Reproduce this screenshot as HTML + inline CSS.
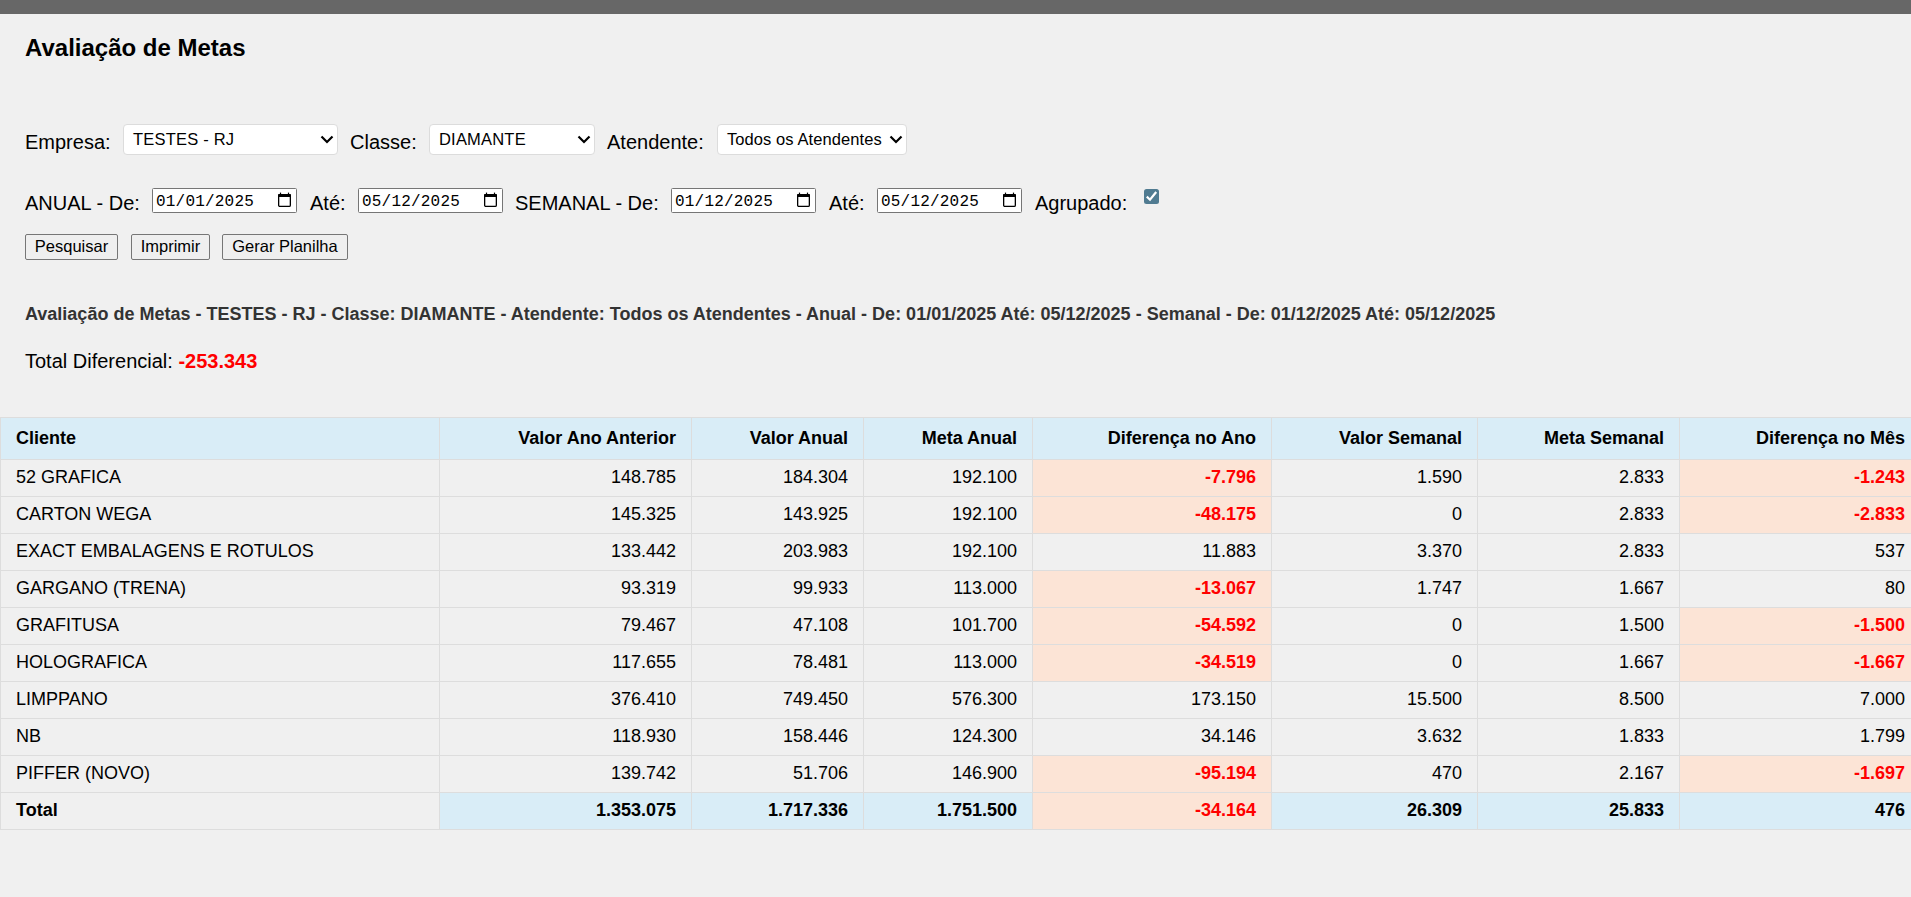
<!DOCTYPE html>
<html><head><meta charset="utf-8">
<style>
html,body{margin:0;padding:0;}
body{background:#f0f0f0;font-family:"Liberation Sans",sans-serif;color:#000;width:1911px;height:897px;overflow:hidden;position:relative;}
.topbar{position:absolute;left:0;top:0;width:1911px;height:14px;background:#676767;}
.abs{position:absolute;white-space:nowrap;}
h1{position:absolute;left:25px;top:34px;margin:0;font-size:24px;font-weight:bold;line-height:28px;}
.lbl{font-size:20px;line-height:23px;}
.sel{position:absolute;white-space:nowrap;font-size:16.5px;background:#fff;border:1px solid #dcdcdc;border-radius:4px;height:31px;line-height:29px;padding:0 0 0 9px;box-sizing:border-box;}
.chev{position:absolute;right:3px;top:10px;}
.chev polyline{fill:none;stroke:#000;stroke-width:2.2;}
.date{position:absolute;white-space:nowrap;font-family:"Liberation Mono",monospace;font-size:16px;box-sizing:border-box;width:145px;height:25px;line-height:27px;letter-spacing:0.2px;border:1px solid #767676;border-radius:1.5px;background:#fff;padding:0 0 0 3px;}
.cal{position:absolute;left:125px;top:3px;}
.btn{position:absolute;white-space:nowrap;font-size:16.5px;height:26px;line-height:22px;text-align:center;box-sizing:border-box;border:1px solid #767676;border-radius:2px;background:#efefef;}
.summary{font-size:18px;font-weight:bold;color:#333;}
.neg{color:#f00;font-weight:bold;}
table{position:absolute;left:0;top:417px;border-collapse:collapse;table-layout:fixed;width:1920px;font-size:18px;}
th,td{border:1px solid #ddd;padding:0 15px;text-align:right;}
th{background:#d9edf7;height:41px;}
td{height:34px;padding-top:0;padding-bottom:2px;}
th:first-child,td:first-child{text-align:left;}
td.r{background:#fce4d6;color:#f00;font-weight:bold;}
tr.tot td{font-weight:bold;background:#d9edf7;}
tr.tot td:first-child{background:#f0f0f0;}
tr.tot td.r{background:#fce4d6;}
</style></head><body>
<div class="topbar"></div>
<h1>Avaliação de Metas</h1>

<div class="abs lbl" style="left:25px;top:131px;">Empresa:</div>
<div class="sel" style="left:123px;top:124px;width:215px;letter-spacing:0.2px;">TESTES - RJ<svg class="chev" width="14" height="10" viewBox="0 0 14 10"><polyline points="1.5,1.5 7,7 12.5,1.5"/></svg></div>
<div class="abs lbl" style="left:350px;top:131px;">Classe:</div>
<div class="sel" style="left:429px;top:124px;width:166px;letter-spacing:0.2px;">DIAMANTE<svg class="chev" width="14" height="10" viewBox="0 0 14 10"><polyline points="1.5,1.5 7,7 12.5,1.5"/></svg></div>
<div class="abs lbl" style="left:607px;top:131px;">Atendente:</div>
<div class="sel" style="left:717px;top:124px;width:190px;letter-spacing:0.08px;">Todos os Atendentes<svg class="chev" width="14" height="10" viewBox="0 0 14 10"><polyline points="1.5,1.5 7,7 12.5,1.5"/></svg></div>

<div class="abs lbl" style="left:25px;top:192px;">ANUAL - De:</div>
<div class="date" style="left:152px;top:188px;">01/01/2025<svg class="cal" width="14" height="16" viewBox="0 0 14 16"><rect x="0.65" y="2.65" width="11.7" height="11.7" rx="1.2" fill="none" stroke="#000" stroke-width="1.3"/><rect x="0" y="2" width="13" height="2.9" rx="1"/><rect x="1.9" y="0.6" width="1.2" height="2"/><rect x="9.9" y="0.6" width="1.2" height="2"/></svg></div>
<div class="abs lbl" style="left:310px;top:192px;">Até:</div>
<div class="date" style="left:358px;top:188px;">05/12/2025<svg class="cal" width="14" height="16" viewBox="0 0 14 16"><rect x="0.65" y="2.65" width="11.7" height="11.7" rx="1.2" fill="none" stroke="#000" stroke-width="1.3"/><rect x="0" y="2" width="13" height="2.9" rx="1"/><rect x="1.9" y="0.6" width="1.2" height="2"/><rect x="9.9" y="0.6" width="1.2" height="2"/></svg></div>
<div class="abs lbl" style="left:515px;top:192px;">SEMANAL - De:</div>
<div class="date" style="left:671px;top:188px;">01/12/2025<svg class="cal" width="14" height="16" viewBox="0 0 14 16"><rect x="0.65" y="2.65" width="11.7" height="11.7" rx="1.2" fill="none" stroke="#000" stroke-width="1.3"/><rect x="0" y="2" width="13" height="2.9" rx="1"/><rect x="1.9" y="0.6" width="1.2" height="2"/><rect x="9.9" y="0.6" width="1.2" height="2"/></svg></div>
<div class="abs lbl" style="left:829px;top:192px;">Até:</div>
<div class="date" style="left:877px;top:188px;">05/12/2025<svg class="cal" width="14" height="16" viewBox="0 0 14 16"><rect x="0.65" y="2.65" width="11.7" height="11.7" rx="1.2" fill="none" stroke="#000" stroke-width="1.3"/><rect x="0" y="2" width="13" height="2.9" rx="1"/><rect x="1.9" y="0.6" width="1.2" height="2"/><rect x="9.9" y="0.6" width="1.2" height="2"/></svg></div>
<div class="abs lbl" style="left:1035px;top:192px;">Agrupado:</div>
<svg class="abs" style="left:1143px;top:188px;" width="17" height="17" viewBox="0 0 17 17"><rect x="1" y="1" width="15" height="15" rx="2.5" fill="#507b91"/><polyline points="3.8,8.6 7,11.7 13.2,4.0" fill="none" stroke="#fff" stroke-width="2.2"/></svg>

<div class="btn" style="left:25px;top:234px;width:93px;">Pesquisar</div>
<div class="btn" style="left:131px;top:234px;width:79px;">Imprimir</div>
<div class="btn" style="left:222px;top:234px;width:126px;">Gerar Planilha</div>

<div class="abs summary" style="left:25px;top:304px;">Avaliação de Metas - TESTES - RJ - Classe: DIAMANTE - Atendente: Todos os Atendentes - Anual - De: 01/01/2025 Até: 05/12/2025 - Semanal - De: 01/12/2025 Até: 05/12/2025</div>
<div class="abs lbl" style="left:25px;top:350px;">Total Diferencial: <span class="neg">-253.343</span></div>

<table>
<colgroup><col style="width:439px"><col style="width:252px"><col style="width:172px"><col style="width:169px"><col style="width:239px"><col style="width:206px"><col style="width:202px"><col style="width:241px"></colgroup>
<thead><tr><th>Cliente</th><th>Valor Ano Anterior</th><th>Valor Anual</th><th>Meta Anual</th><th>Diferença no Ano</th><th>Valor Semanal</th><th>Meta Semanal</th><th>Diferença no Mês</th></tr></thead>
<tbody>
<tr><td>52 GRAFICA</td><td>148.785</td><td>184.304</td><td>192.100</td><td class="r">-7.796</td><td>1.590</td><td>2.833</td><td class="r">-1.243</td></tr>
<tr><td>CARTON WEGA</td><td>145.325</td><td>143.925</td><td>192.100</td><td class="r">-48.175</td><td>0</td><td>2.833</td><td class="r">-2.833</td></tr>
<tr><td>EXACT EMBALAGENS E ROTULOS</td><td>133.442</td><td>203.983</td><td>192.100</td><td>11.883</td><td>3.370</td><td>2.833</td><td>537</td></tr>
<tr><td>GARGANO (TRENA)</td><td>93.319</td><td>99.933</td><td>113.000</td><td class="r">-13.067</td><td>1.747</td><td>1.667</td><td>80</td></tr>
<tr><td>GRAFITUSA</td><td>79.467</td><td>47.108</td><td>101.700</td><td class="r">-54.592</td><td>0</td><td>1.500</td><td class="r">-1.500</td></tr>
<tr><td>HOLOGRAFICA</td><td>117.655</td><td>78.481</td><td>113.000</td><td class="r">-34.519</td><td>0</td><td>1.667</td><td class="r">-1.667</td></tr>
<tr><td>LIMPPANO</td><td>376.410</td><td>749.450</td><td>576.300</td><td>173.150</td><td>15.500</td><td>8.500</td><td>7.000</td></tr>
<tr><td>NB</td><td>118.930</td><td>158.446</td><td>124.300</td><td>34.146</td><td>3.632</td><td>1.833</td><td>1.799</td></tr>
<tr><td>PIFFER (NOVO)</td><td>139.742</td><td>51.706</td><td>146.900</td><td class="r">-95.194</td><td>470</td><td>2.167</td><td class="r">-1.697</td></tr>
<tr class="tot"><td>Total</td><td>1.353.075</td><td>1.717.336</td><td>1.751.500</td><td class="r">-34.164</td><td>26.309</td><td>25.833</td><td>476</td></tr>
</tbody></table>
</body></html>
